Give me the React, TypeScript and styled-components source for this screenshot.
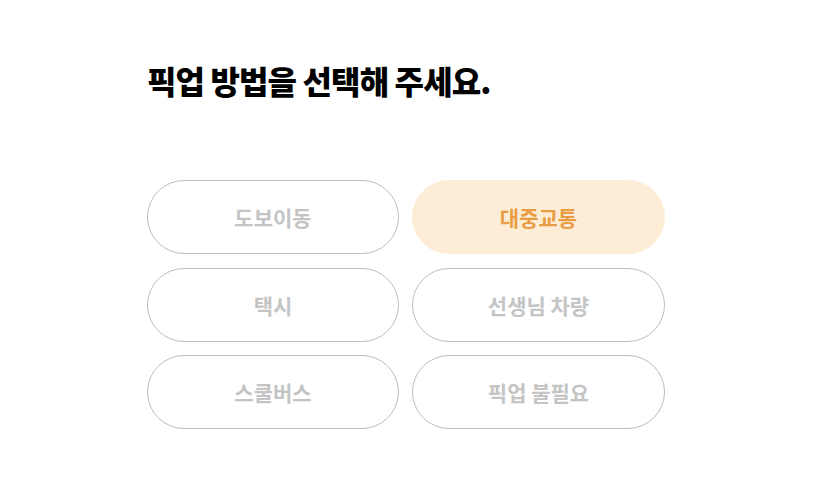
import React, { useState } from "react"
import styled, { createGlobalStyle } from "styled-components"

const GlobalStyle = createGlobalStyle`
  body {
    margin: 0;
    background: #ffffff;
    font-family: "Noto Sans CJK KR", "Noto Sans", sans-serif;
  }
`

const Page = styled.div`
  width: 814px;
  height: 494px;
  padding: 60px 0 0 147px;
  box-sizing: border-box;
`

const Title = styled.h1`
  margin: 0;
  font-size: 32px;
  font-weight: 800;
  letter-spacing: -0.9px;
  line-height: 40px;
  color: #000000;
`

const Grid = styled.div`
  display: grid;
  grid-template-columns: 252px 253px;
  column-gap: 13px;
  row-gap: 13.5px;
  margin-top: 80px;
`

const Option = styled.button<{ $active: boolean }>`
  height: 74px;
  border-radius: 37px;
  border: 1px solid ${(p) => (p.$active ? "#fdedd7" : "#bdbdbd")};
  background: ${(p) => (p.$active ? "#fdedd7" : "#ffffff")};
  color: ${(p) => (p.$active ? "#ea9c45" : "#c4c4c4")};
  font-family: "Noto Sans CJK KR", "Noto Sans", sans-serif;
  font-size: 21px;
  font-weight: 700;
  cursor: pointer;
  padding: 0;
`

const options = ["도보이동", "대중교통", "택시", "선생님 차량", "스쿨버스", "픽업 불필요"]

function App() {
  const [selected, setSelected] = useState("대중교통")

  return (
    <>
      <GlobalStyle />
      <Page>
        <Title>픽업 방법을 선택해 주세요.</Title>
        <Grid>
          {options.map((o) => (
            <Option key={o} $active={selected === o} onClick={() => setSelected(o)}>
              {o}
            </Option>
          ))}
        </Grid>
      </Page>
    </>
  )
}

export default App
